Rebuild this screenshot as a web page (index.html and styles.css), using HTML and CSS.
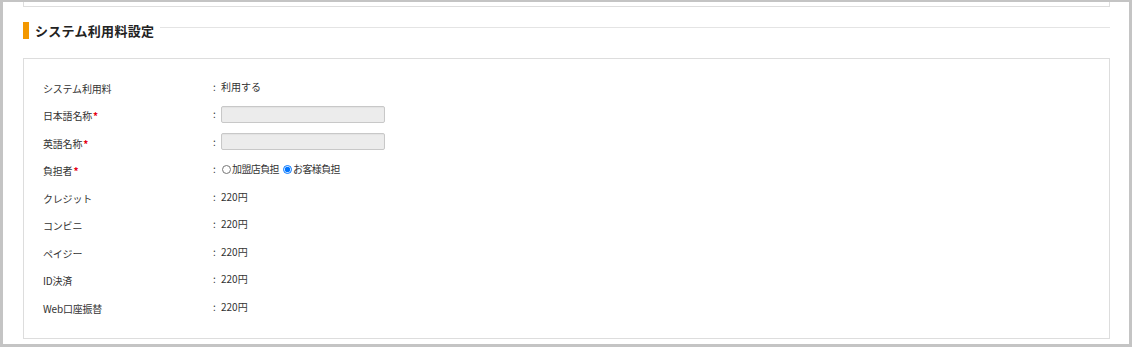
FILE: index.html
```html
<!DOCTYPE html>
<html lang="ja">
<head>
<meta charset="utf-8">
<link rel="stylesheet" href="styles.css">
</head>
<body>
<div class="frame">
  <div class="prev"></div>
  <div class="heading">
    <span class="bar"></span>
    <h2 class="title">システム利用料設定</h2>
    <span class="rule"></span>
  </div>
  <div class="card">
    <div class="row"><div class="label">システム利用料</div><div class="value"><span class="colon">:</span>利用する</div></div>
    <div class="row"><div class="label">日本語名称<span class="req">*</span></div><div class="value"><span class="colon">:</span><input class="field" type="text"></div></div>
    <div class="row"><div class="label">英語名称<span class="req">*</span></div><div class="value"><span class="colon">:</span><input class="field" type="text"></div></div>
    <div class="row"><div class="label">負担者<span class="req">*</span></div><div class="value"><span class="colon">:</span><label class="opt"><input class="radio" type="radio" name="payer">加盟店負担</label><label class="opt"><input class="radio" type="radio" name="payer" checked>お客様負担</label></div></div>
    <div class="row"><div class="label">クレジット</div><div class="value"><span class="colon">:</span>220円</div></div>
    <div class="row"><div class="label">コンビニ</div><div class="value"><span class="colon">:</span>220円</div></div>
    <div class="row"><div class="label">ペイジー</div><div class="value"><span class="colon">:</span>220円</div></div>
    <div class="row"><div class="label">ID決済</div><div class="value"><span class="colon">:</span>220円</div></div>
    <div class="row"><div class="label">Web口座振替</div><div class="value"><span class="colon">:</span>220円</div></div>
  </div>
</div>
</body>
</html>
```
FILE: styles.css
```css
html, body {
  margin: 0;
  padding: 0;
  background: #fff;
}
body {
  font-family: "Noto Sans CJK JP", "Noto Sans", sans-serif;
  color: #333;
}
.frame {
  box-sizing: border-box;
  width: 1132px;
  height: 347px;
  border-style: solid;
  border-color: #c4c4c4;
  border-width: 2px 3px 3px 3px;
  padding: 0 19px 0 20px;
  background: #fff;
}
.prev {
  height: 5px;
  border: 1px solid #dedede;
  border-top: none;
  box-sizing: border-box;
}
.heading {
  display: flex;
  align-items: center;
  height: 17px;
  margin-top: 15px;
}
.bar {
  width: 6px;
  height: 17px;
  background: #f39800;
  flex: none;
}
.title {
  margin: 0 0 0 6px;
  font-size: 13px;
  font-weight: bold;
  line-height: 17px;
  letter-spacing: 0.3px;
  color: #222;
  white-space: nowrap;
}
.rule {
  flex: 1;
  height: 1px;
  background: #e4e4e4;
  margin: 0 0 6px 6px;
}
.card {
  margin-top: 19px;
  border: 1px solid #dddddd;
  padding: 14px 20px 17px 19px;
}
.row {
  display: grid;
  grid-template-columns: 170px 1fr;
  align-items: center;
  height: 27.5px;
  font-size: 10px;
  line-height: 14px;
}
.label {
  padding-top: 4px;
  white-space: nowrap;
  letter-spacing: -0.2px;
}
.req {
  color: #e60012;
  margin-left: 1px;
  font-size: 10px;
  font-weight: bold;
}
.value {
  display: flex;
  align-items: center;
  white-space: nowrap;
}
.colon {
  width: 8px;
  flex: none;
}
.field {
  box-sizing: border-box;
  width: 164px;
  height: 17px;
  margin: 0;
  border: 1px solid #c8c8c8;
  border-radius: 2px;
  background: #ececec;
  box-shadow: inset 0 1px 1px rgba(0,0,0,0.04);
  padding: 0 3px;
  font: inherit;
}
.opt {
  display: inline-flex;
  align-items: center;
  margin-right: 3px;
  letter-spacing: -0.6px;
}
.radio {
  width: 9px;
  height: 9px;
  margin: 0 1px 0 1px;
}
```
